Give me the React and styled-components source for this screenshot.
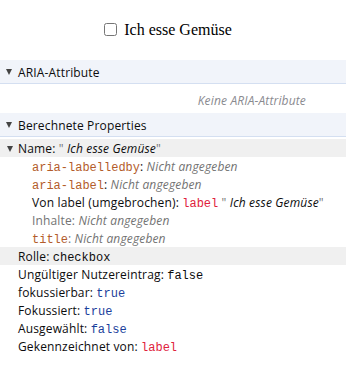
import React from "react";
import styled, { createGlobalStyle } from "styled-components";

const Global = createGlobalStyle`
  html, body { margin: 0; padding: 0; background: #fff; }
  body { font-family: "Open Sans", "Noto Sans", sans-serif; }
`;

const Page = styled.div`
  width: 346px;
  display: flex;
  flex-direction: column;
`;

const Preview = styled.div`
  height: 60px;
  display: flex;
  align-items: center;
  justify-content: center;
  font-family: "Liberation Serif", serif;
  font-size: 16px;
  color: #000;
  padding-right: 10px;
  padding-bottom: 1px;
  box-sizing: border-box;
`;

const Check = styled.input`
  width: 13px;
  height: 13px;
  margin: 0 7px 0 0;
`;

const SectionHeader = styled.div`
  height: 24px;
  background: #f1f4fa;
  border-bottom: 1px solid #d4dff1;
  display: flex;
  align-items: center;
  padding-left: 6px;
  padding-top: 1px;
  box-sizing: border-box;
  gap: 6px;
  font-size: 12px;
  letter-spacing: 0.15px;
  color: #0c0c0d;
`;

const Twisty = styled.span`
  width: 0;
  height: 0;
  border-left: 3.5px solid transparent;
  border-right: 3.5px solid transparent;
  border-top: 6px solid #444;
  display: inline-block;
  flex: none;
`;

const Empty = styled.div`
  height: 29px;
  display: flex;
  align-items: center;
  justify-content: flex-end;
  padding-right: 40px;
  padding-top: 4px;
  box-sizing: border-box;
  font-size: 12px;
  letter-spacing: 0.15px;
  font-style: italic;
  color: #8a8a8f;
`;

const Tree = styled.div`
  padding-top: 2px;
  display: flex;
  flex-direction: column;
`;

const Row = styled.div`
  height: 18px;
  display: flex;
  align-items: center;
  gap: 5px;
  padding-left: ${(p) => p.$indent}px;
  padding-top: 1px;
  box-sizing: border-box;
  background: ${(p) => (p.$shade ? "#f0f0f0" : "transparent")};
  font-size: 12px;
  letter-spacing: 0.15px;
  color: ${(p) => (p.$dim ? "#737373" : "#0c0c0d")};
  white-space: nowrap;
`;

const Line = styled.span``;

const Mono = styled.span`
  font-family: "Liberation Mono", "DejaVu Sans Mono", monospace;
  font-size: 12px;
  letter-spacing: 0;
  color: ${(p) => p.$c};
`;

const Note = styled.span`
  font-style: italic;
  color: ${(p) => (p.$dark ? "#0c0c0d" : "#737373")};
`;

const Quote = styled.span`
  color: #737373;
`;

const ATTR = "#b35c2b";
const RED = "#e0223c";
const BLUE = "#1b3f9c";

const Quoted = ({ text }) => (
  <>
    <Quote>"</Quote> <Note $dark>{text}</Note>
    <Quote>"</Quote>
  </>
);

export default function App() {
  return (
    <Page>
      <Global />
      <Preview>
        <Check type="checkbox" id="veg" />
        <label htmlFor="veg">Ich esse Gemüse</label>
      </Preview>
      <SectionHeader>
        <Twisty />
        <span>ARIA-Attribute</span>
      </SectionHeader>
      <Empty>Keine ARIA-Attribute</Empty>
      <SectionHeader>
        <Twisty />
        <span>Berechnete Properties</span>
      </SectionHeader>
      <Tree>
        <Row $indent={7} $shade>
          <Twisty />
          <Line>
            Name: <Quoted text="Ich esse Gemüse" />
          </Line>
        </Row>
        <Row $indent={32}>
          <Line>
            <Mono $c={ATTR}>aria-labelledby</Mono>: <Note>Nicht angegeben</Note>
          </Line>
        </Row>
        <Row $indent={32}>
          <Line>
            <Mono $c={ATTR}>aria-label</Mono>: <Note>Nicht angegeben</Note>
          </Line>
        </Row>
        <Row $indent={32}>
          <Line>
            Von label (umgebrochen): <Mono $c={RED}>label</Mono>{" "}
            <Quoted text="Ich esse Gemüse" />
          </Line>
        </Row>
        <Row $indent={32} $dim>
          <Line>
            Inhalte: <Note>Nicht angegeben</Note>
          </Line>
        </Row>
        <Row $indent={32} $dim>
          <Line>
            <Mono $c={ATTR}>title</Mono>: <Note>Nicht angegeben</Note>
          </Line>
        </Row>
        <Row $indent={18} $shade>
          <Line>
            Rolle: <Mono $c="#0c0c0d">checkbox</Mono>
          </Line>
        </Row>
        <Row $indent={18}>
          <Line>
            Ungültiger Nutzereintrag: <Mono $c="#0c0c0d">false</Mono>
          </Line>
        </Row>
        <Row $indent={18}>
          <Line>
            fokussierbar: <Mono $c={BLUE}>true</Mono>
          </Line>
        </Row>
        <Row $indent={18}>
          <Line>
            Fokussiert: <Mono $c={BLUE}>true</Mono>
          </Line>
        </Row>
        <Row $indent={18}>
          <Line>
            Ausgewählt: <Mono $c={BLUE}>false</Mono>
          </Line>
        </Row>
        <Row $indent={18}>
          <Line>
            Gekennzeichnet von: <Mono $c={RED}>label</Mono>
          </Line>
        </Row>
      </Tree>
    </Page>
  );
}
